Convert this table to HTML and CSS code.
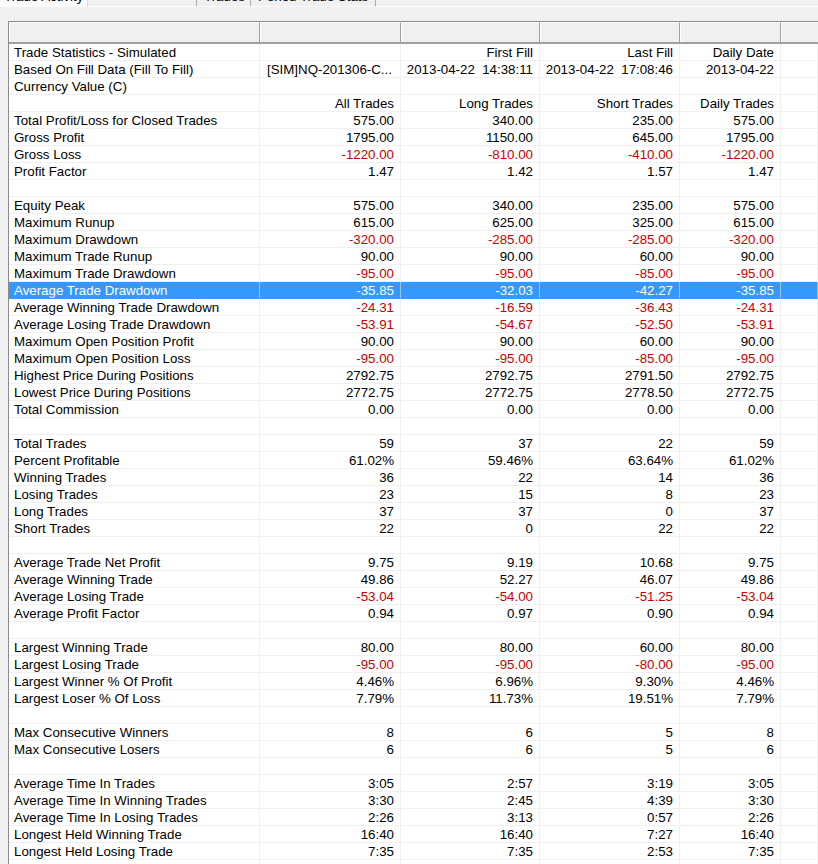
FILE: index.html
```html
<!DOCTYPE html>
<html>
<head>
<meta charset="utf-8">
<title>Trade Statistics</title>
<link rel="stylesheet" href="styles.css">
</head>
<body>
<div class="tabstrip">
  <div class="tab sel"><span class="lbl">Trade Activity</span></div>
  <div class="tabgap"></div>
  <div class="tab t2"><span class="lbl">Trades</span></div>
  <div class="tab t3"><span class="lbl">Period Trade Stats</span></div>
  <div class="tabrest"></div>
</div>
<div class="grid">
  <div class="row head"><span class="h"></span><span class="h"></span><span class="h"></span><span class="h"></span><span class="h"></span><span class="h last"></span></div>

  <div class="row"><span class="c">Trade Statistics - Simulated</span><span class="c"></span><span class="c r">First Fill</span><span class="c r">Last Fill</span><span class="c r">Daily Date</span><span class="c"></span></div>
  <div class="row"><span class="c">Based On Fill Data (Fill To Fill)</span><span class="c sym">[SIM]NQ-201306-C...</span><span class="c r">2013-04-22  14:38:11</span><span class="c r">2013-04-22  17:08:46</span><span class="c r">2013-04-22</span><span class="c"></span></div>
  <div class="row"><span class="c">Currency Value (C)</span><span class="c"></span><span class="c"></span><span class="c"></span><span class="c"></span><span class="c"></span></div>
  <div class="row"><span class="c"></span><span class="c r">All Trades</span><span class="c r">Long Trades</span><span class="c r">Short Trades</span><span class="c r">Daily Trades</span><span class="c"></span></div>
  <div class="row"><span class="c">Total Profit/Loss for Closed Trades</span><span class="c r">575.00</span><span class="c r">340.00</span><span class="c r">235.00</span><span class="c r">575.00</span><span class="c"></span></div>
  <div class="row"><span class="c">Gross Profit</span><span class="c r">1795.00</span><span class="c r">1150.00</span><span class="c r">645.00</span><span class="c r">1795.00</span><span class="c"></span></div>
  <div class="row"><span class="c">Gross Loss</span><span class="c r neg">-1220.00</span><span class="c r neg">-810.00</span><span class="c r neg">-410.00</span><span class="c r neg">-1220.00</span><span class="c"></span></div>
  <div class="row"><span class="c">Profit Factor</span><span class="c r">1.47</span><span class="c r">1.42</span><span class="c r">1.57</span><span class="c r">1.47</span><span class="c"></span></div>
  <div class="row"><span class="c"></span><span class="c"></span><span class="c"></span><span class="c"></span><span class="c"></span><span class="c"></span></div>

  <div class="row"><span class="c">Equity Peak</span><span class="c r">575.00</span><span class="c r">340.00</span><span class="c r">235.00</span><span class="c r">575.00</span><span class="c"></span></div>
  <div class="row"><span class="c">Maximum Runup</span><span class="c r">615.00</span><span class="c r">625.00</span><span class="c r">325.00</span><span class="c r">615.00</span><span class="c"></span></div>
  <div class="row"><span class="c">Maximum Drawdown</span><span class="c r neg">-320.00</span><span class="c r neg">-285.00</span><span class="c r neg">-285.00</span><span class="c r neg">-320.00</span><span class="c"></span></div>
  <div class="row"><span class="c">Maximum Trade Runup</span><span class="c r">90.00</span><span class="c r">90.00</span><span class="c r">60.00</span><span class="c r">90.00</span><span class="c"></span></div>
  <div class="row"><span class="c">Maximum Trade Drawdown</span><span class="c r neg">-95.00</span><span class="c r neg">-95.00</span><span class="c r neg">-85.00</span><span class="c r neg">-95.00</span><span class="c"></span></div>
  <div class="row selected"><span class="c">Average Trade Drawdown</span><span class="c r neg">-35.85</span><span class="c r neg">-32.03</span><span class="c r neg">-42.27</span><span class="c r neg">-35.85</span><span class="c"></span></div>
  <div class="row"><span class="c">Average Winning Trade Drawdown</span><span class="c r neg">-24.31</span><span class="c r neg">-16.59</span><span class="c r neg">-36.43</span><span class="c r neg">-24.31</span><span class="c"></span></div>
  <div class="row"><span class="c">Average Losing Trade Drawdown</span><span class="c r neg">-53.91</span><span class="c r neg">-54.67</span><span class="c r neg">-52.50</span><span class="c r neg">-53.91</span><span class="c"></span></div>
  <div class="row"><span class="c">Maximum Open Position Profit</span><span class="c r">90.00</span><span class="c r">90.00</span><span class="c r">60.00</span><span class="c r">90.00</span><span class="c"></span></div>
  <div class="row"><span class="c">Maximum Open Position Loss</span><span class="c r neg">-95.00</span><span class="c r neg">-95.00</span><span class="c r neg">-85.00</span><span class="c r neg">-95.00</span><span class="c"></span></div>
  <div class="row"><span class="c">Highest Price During Positions</span><span class="c r">2792.75</span><span class="c r">2792.75</span><span class="c r">2791.50</span><span class="c r">2792.75</span><span class="c"></span></div>
  <div class="row"><span class="c">Lowest Price During Positions</span><span class="c r">2772.75</span><span class="c r">2772.75</span><span class="c r">2778.50</span><span class="c r">2772.75</span><span class="c"></span></div>
  <div class="row"><span class="c">Total Commission</span><span class="c r">0.00</span><span class="c r">0.00</span><span class="c r">0.00</span><span class="c r">0.00</span><span class="c"></span></div>
  <div class="row"><span class="c"></span><span class="c"></span><span class="c"></span><span class="c"></span><span class="c"></span><span class="c"></span></div>

  <div class="row"><span class="c">Total Trades</span><span class="c r">59</span><span class="c r">37</span><span class="c r">22</span><span class="c r">59</span><span class="c"></span></div>
  <div class="row"><span class="c">Percent Profitable</span><span class="c r">61.02%</span><span class="c r">59.46%</span><span class="c r">63.64%</span><span class="c r">61.02%</span><span class="c"></span></div>
  <div class="row"><span class="c">Winning Trades</span><span class="c r">36</span><span class="c r">22</span><span class="c r">14</span><span class="c r">36</span><span class="c"></span></div>
  <div class="row"><span class="c">Losing Trades</span><span class="c r">23</span><span class="c r">15</span><span class="c r">8</span><span class="c r">23</span><span class="c"></span></div>
  <div class="row"><span class="c">Long Trades</span><span class="c r">37</span><span class="c r">37</span><span class="c r">0</span><span class="c r">37</span><span class="c"></span></div>
  <div class="row"><span class="c">Short Trades</span><span class="c r">22</span><span class="c r">0</span><span class="c r">22</span><span class="c r">22</span><span class="c"></span></div>
  <div class="row"><span class="c"></span><span class="c"></span><span class="c"></span><span class="c"></span><span class="c"></span><span class="c"></span></div>

  <div class="row"><span class="c">Average Trade Net Profit</span><span class="c r">9.75</span><span class="c r">9.19</span><span class="c r">10.68</span><span class="c r">9.75</span><span class="c"></span></div>
  <div class="row"><span class="c">Average Winning Trade</span><span class="c r">49.86</span><span class="c r">52.27</span><span class="c r">46.07</span><span class="c r">49.86</span><span class="c"></span></div>
  <div class="row"><span class="c">Average Losing Trade</span><span class="c r neg">-53.04</span><span class="c r neg">-54.00</span><span class="c r neg">-51.25</span><span class="c r neg">-53.04</span><span class="c"></span></div>
  <div class="row"><span class="c">Average Profit Factor</span><span class="c r">0.94</span><span class="c r">0.97</span><span class="c r">0.90</span><span class="c r">0.94</span><span class="c"></span></div>
  <div class="row"><span class="c"></span><span class="c"></span><span class="c"></span><span class="c"></span><span class="c"></span><span class="c"></span></div>

  <div class="row"><span class="c">Largest Winning Trade</span><span class="c r">80.00</span><span class="c r">80.00</span><span class="c r">60.00</span><span class="c r">80.00</span><span class="c"></span></div>
  <div class="row"><span class="c">Largest Losing Trade</span><span class="c r neg">-95.00</span><span class="c r neg">-95.00</span><span class="c r neg">-80.00</span><span class="c r neg">-95.00</span><span class="c"></span></div>
  <div class="row"><span class="c">Largest Winner % Of Profit</span><span class="c r">4.46%</span><span class="c r">6.96%</span><span class="c r">9.30%</span><span class="c r">4.46%</span><span class="c"></span></div>
  <div class="row"><span class="c">Largest Loser % Of Loss</span><span class="c r">7.79%</span><span class="c r">11.73%</span><span class="c r">19.51%</span><span class="c r">7.79%</span><span class="c"></span></div>
  <div class="row"><span class="c"></span><span class="c"></span><span class="c"></span><span class="c"></span><span class="c"></span><span class="c"></span></div>

  <div class="row"><span class="c">Max Consecutive Winners</span><span class="c r">8</span><span class="c r">6</span><span class="c r">5</span><span class="c r">8</span><span class="c"></span></div>
  <div class="row"><span class="c">Max Consecutive Losers</span><span class="c r">6</span><span class="c r">6</span><span class="c r">5</span><span class="c r">6</span><span class="c"></span></div>
  <div class="row"><span class="c"></span><span class="c"></span><span class="c"></span><span class="c"></span><span class="c"></span><span class="c"></span></div>

  <div class="row"><span class="c">Average Time In Trades</span><span class="c r">3:05</span><span class="c r">2:57</span><span class="c r">3:19</span><span class="c r">3:05</span><span class="c"></span></div>
  <div class="row"><span class="c">Average Time In Winning Trades</span><span class="c r">3:30</span><span class="c r">2:45</span><span class="c r">4:39</span><span class="c r">3:30</span><span class="c"></span></div>
  <div class="row"><span class="c">Average Time In Losing Trades</span><span class="c r">2:26</span><span class="c r">3:13</span><span class="c r">0:57</span><span class="c r">2:26</span><span class="c"></span></div>
  <div class="row"><span class="c">Longest Held Winning Trade</span><span class="c r">16:40</span><span class="c r">16:40</span><span class="c r">7:27</span><span class="c r">16:40</span><span class="c"></span></div>
  <div class="row"><span class="c">Longest Held Losing Trade</span><span class="c r">7:35</span><span class="c r">7:35</span><span class="c r">2:53</span><span class="c r">7:35</span><span class="c"></span></div>
  <div class="row"><span class="c"></span><span class="c"></span><span class="c"></span><span class="c"></span><span class="c"></span><span class="c"></span></div>
  <div class="row"><span class="c"></span><span class="c"></span><span class="c"></span><span class="c"></span><span class="c"></span><span class="c"></span></div>
</div>
</body>
</html>
```
FILE: styles.css
```css
html, body {
  margin: 0;
  padding: 0;
}
body {
  width: 818px;
  height: 864px;
  overflow: hidden;
  background: #f0f0f0;
  font-family: "Liberation Sans", Arial, sans-serif;
  font-size: 13.3px;
  color: #000;
}
.tabstrip {
  display: flex;
  height: 7px;
  overflow: hidden;
}
.tab {
  height: 7px;
  overflow: hidden;
  box-sizing: border-box;
  white-space: nowrap;
}
.tab .lbl {
  display: block;
  margin-top: -11px;
  line-height: 15px;
}
.tab.sel {
  width: 88px;
  background: #fcfcfc;
  border-right: 1px solid #d9d9d9;
  padding-left: 4px;
}
.tabgap {
  width: 108px;
  border-bottom: 1px solid #fcfcfc;
}
.tab.t2 {
  width: 55px;
  border-left: 1px solid #adadad;
  border-right: 1px solid #adadad;
  border-bottom: 1px solid #fcfcfc;
  padding-left: 7px;
}
.tab.t3 {
  width: 125px;
  border-right: 1px solid #adadad;
  border-bottom: 1px solid #fcfcfc;
  padding-left: 7px;
}
.tabrest {
  flex: 1;
  border-bottom: 1px solid #fcfcfc;
}
.grid {
  margin: 14px 0 0 8px;
  width: 810px;
  border-top: 1px solid #8c8c8c;
  border-left: 1px solid #8c8c8c;
  box-sizing: border-box;
  background: #fff;
}
.row {
  display: grid;
  grid-template-columns: 251px 141px 139px 140px 101px 1fr;
  height: 17px;
}
.row.head {
  height: 22px;
}
.h {
  box-sizing: border-box;
  background: #f0f0f0;
  border-top: 1px solid #fafafa;
  border-bottom: 2px solid #a0a0a0;
  border-right: 1px solid #a0a0a0;
  box-shadow: inset 1px 0 0 #ffffff;
}
.h.last {
  border-right: none;
}
.c {
  box-sizing: border-box;
  height: 17px;
  border-right: 1px solid #f0f0f0;
  border-bottom: 1px solid #f0f0f0;
  padding: 1px 5px 0 5px;
  line-height: 16px;
  white-space: pre;
  overflow: hidden;
}
.c.r {
  text-align: right;
  padding-right: 6px;
}
.c.sym {
  padding-left: 7px;
}
.neg {
  color: #c80000;
}
.row.selected {
  background: #3399ff;
}
.row.selected .c {
  color: #fff;
  border-right-color: #8fc6ff;
  border-bottom-color: #3399ff;
}
```
